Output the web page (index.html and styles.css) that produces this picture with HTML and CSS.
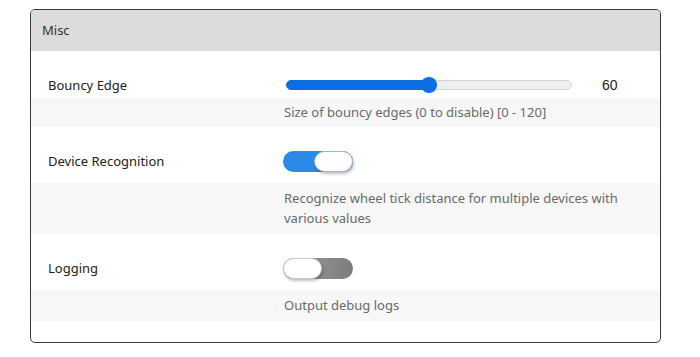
FILE: index.html
```html
<!DOCTYPE html>
<html lang="en">
<head>
    <meta charset="UTF-8">
    <title>Misc settings</title>
    <link rel="stylesheet" href="styles.css">
</head>
<body>
    <div class="card">
        <div class="card-header">Misc</div>

        <div class="setting">
            <div class="setting-main first">
                <div class="setting-label">Bouncy Edge</div>
                <div class="setting-control">
                    <div class="slider">
                        <div class="slider-fill" style="width: 50%"></div>
                        <div class="slider-thumb" style="left: 50%"></div>
                    </div>
                    <span class="slider-value">60</span>
                </div>
            </div>
            <div class="setting-desc first">
                <p>Size of bouncy edges (0 to disable) [0 - 120]</p>
            </div>
        </div>

        <div class="setting">
            <div class="setting-main">
                <div class="setting-label">Device Recognition</div>
                <div class="setting-control">
                    <div class="toggle on"><span class="knob"></span></div>
                </div>
            </div>
            <div class="setting-desc">
                <p>Recognize wheel tick distance for multiple devices with various values</p>
            </div>
        </div>

        <div class="setting">
            <div class="setting-main">
                <div class="setting-label">Logging</div>
                <div class="setting-control">
                    <div class="toggle"><span class="knob"></span></div>
                </div>
            </div>
            <div class="setting-desc">
                <p>Output debug logs</p>
            </div>
        </div>

        <div class="card-footer"></div>
    </div>
</body>
</html>
```

FILE: styles.css
```css
body {
    margin: 9px 0 0 30px;
    font-family: "Noto Sans", "Open Sans", sans-serif;
    font-size: 13px;
    color: #222;
    background: #fff;
}
.card {
    width: 629px;
    border: 1px solid #3a3a3a;
    border-radius: 5px;
    overflow: hidden;
    background: #fff;
}
.card-header {
    background: #dcdcdc;
    height: 41px;
    line-height: 41px;
    padding-left: 11px;
    color: #333;
}
.setting-main {
    display: flex;
    align-items: center;
    padding: 24px 0 12px;
    height: 20px;
}
.setting-main.first {
    padding-bottom: 3px;
}
.setting-label {
    width: 235px;
    padding-left: 17px;
    flex-shrink: 0;
}
.setting-control {
    display: flex;
    align-items: center;
}
.setting-desc {
    background: #f7f7f7;
    padding: 5px 0 6px 253px;
}
.setting-desc.first {
    padding: 4px 0 5px 253px;
}
.setting-desc p {
    margin: 0;
    max-width: 345px;
    line-height: 20px;
    color: #6a6a6a;
    font-size: 13px;
}
.card-footer {
    height: 21px;
}

/* slider */
.slider {
    position: relative;
    margin-left: 3px;
    width: 284px;
    height: 8px;
    border: 1px solid #d4d4d4;
    border-radius: 5px;
    background: #eeeeee;
}
.slider-fill {
    height: 100%;
    border-radius: 5px;
    background: #0b6fe3;
    margin: -1px 0 0 -1px;
    border: 1px solid #0b6fe3;
}
.slider-thumb {
    position: absolute;
    top: 50%;
    width: 16px;
    height: 16px;
    margin: -8px 0 0 -8px;
    border-radius: 50%;
    background: #0b6fe3;
}
.slider-value {
    margin-left: 30px;
    font-family: "Liberation Sans", Arial, sans-serif;
    font-size: 14px;
    color: #222;
}

/* toggles */
.toggle {
    position: relative;
    width: 70px;
    height: 21px;
    border-radius: 11px;
    background: linear-gradient(to right, #a0a0a0, #7c7c7c);
}
.toggle.on {
    background: #2b8ae8;
}
.knob {
    position: absolute;
    top: 0;
    left: 0;
    width: 37px;
    height: 19px;
    border: 1px solid #c8c8c8;
    border-radius: 11px;
    background: #fff;
    box-shadow: 1px 2px 3px rgba(0, 0, 0, 0.25);
}
.toggle.on .knob {
    left: auto;
    right: 0;
    border-color: #9fb9d3;
}
```
